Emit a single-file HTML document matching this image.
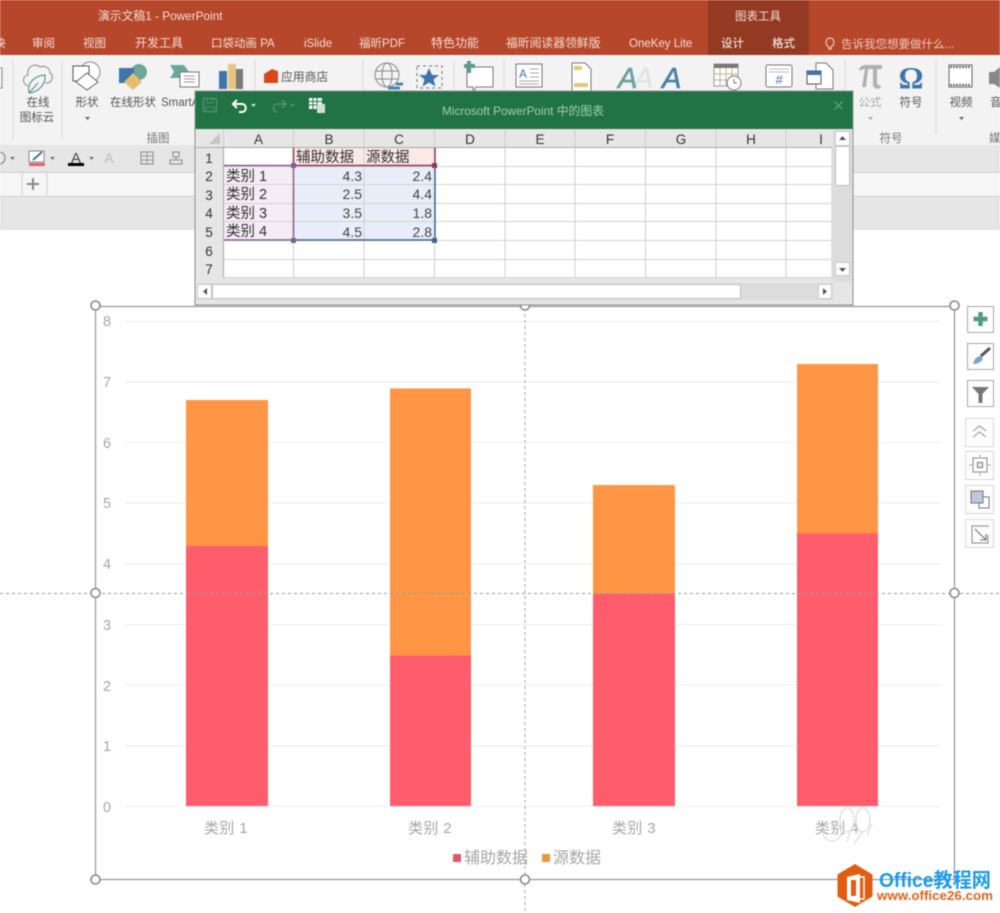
<!DOCTYPE html>
<html lang="zh"><head><meta charset="utf-8"><title>PowerPoint</title>
<style>
html,body{margin:0;padding:0;background:#fff;width:1000px;height:913px;overflow:hidden}
svg{display:block;filter:blur(.4px)}
text{font-family:"Liberation Sans","Noto Sans CJK SC",sans-serif}
.tab{fill:#f3ddd5;font-size:11.5px}
.rb{fill:#555;font-size:11.5px;text-anchor:middle}
.ch{fill:#333;font-size:13.5px;text-anchor:middle}
.c{fill:#333;font-size:14.5px}
.n{fill:#444;font-size:14px;text-anchor:end}
.ax{fill:#a6a6a6;font-size:14.5px}
.cat{fill:#a6a6a6;font-size:15px;text-anchor:middle;letter-spacing:.4px}
.h{fill:#fff;stroke:#8a8a8a;stroke-width:1.6}
.bt{fill:#fff;stroke:#a8a8a8;stroke-width:1}
.bl{fill:#fdfdfd;stroke:#d8d8d8;stroke-width:1}
</style></head><body>
<svg width="1000" height="913" viewBox="0 0 1000 913" xmlns="http://www.w3.org/2000/svg">
<!-- title / tabs -->
<rect width="1000" height="55" fill="#b7472a"/>
<rect x="708" width="101" height="55" fill="#943a22"/>
<text x="98" y="20" class="tab" style="font-size:11.800px">演示文稿1 - PowerPoint</text>
<text x="735" y="20" class="tab">图表工具</text>
<text x="-6" y="47" class="tab">映</text>
<text x="32" y="47" class="tab">审阅</text>
<text x="83" y="47" class="tab">视图</text>
<text x="135" y="47" class="tab" style="font-size:12px">开发工具</text>
<text x="211" y="47" class="tab">口袋动画 PA</text>
<text x="304" y="47" class="tab">iSlide</text>
<text x="359" y="47" class="tab">福昕PDF</text>
<text x="431" y="47" class="tab" style="font-size:12px">特色功能</text>
<text x="506" y="47" class="tab" style="font-size:11.800px">福昕阅读器领鲜版</text>
<text x="629" y="47" class="tab">OneKey Lite</text>
<text x="721" y="47" class="tab" style="fill:#fff">设计</text>
<text x="772" y="47" class="tab" style="fill:#fff">格式</text>
<path d="M829 49v-2c-5-3-3-9 1-9s6 6 1 9v2z" fill="none" stroke="#eec9bb" stroke-width="1.2"/>
<text x="841" y="48" class="tab" style="fill:#eec9bb">告诉我您想要做什么...</text>

<!-- ribbon -->
<rect y="55" width="1000" height="90" fill="#f3f3f3"/>
<rect y="145" width="1000" height="27" fill="#e6e6e6"/>
<rect y="172" width="1000" height="24" fill="#f6f6f6"/>
<rect y="196" width="1000" height="34" fill="#e6e6e6"/>
<rect y="172" width="1000" height="1" fill="#cfcfcf"/>
<rect y="196" width="1000" height="1" fill="#d0d0d0"/>
<path d="M22 173v23M47 173v23" stroke="#d4d4d4"/>
<path d="M33 178v12M27 184h12" stroke="#888" stroke-width="2"/>
<path d="M13 60v80M62 60v80M255 60v75M363 60v75M454 60v30M504 60v30M845 60v75M936 60v75" stroke="#dcdcdc" stroke-width="1"/>
<path d="M0 68h2v20H0" fill="none" stroke="#888"/>
<!-- cloud -->
<path d="M28 86c-6-2-6-10 0-11-2-7 6-13 12-8 5-2 10 1 10 6 4 2 3 8-2 10h-3" fill="none" stroke="#8a8a8a"/>
<path d="M29 93c-2-9 4-17 16-18 1 9-6 17-16 18zM29 93l9-10" fill="none" stroke="#4c8c80"/>
<text x="38" y="106" class="rb">在线</text><text x="37" y="121" class="rb">图标云</text>
<!-- shapes -->
<circle cx="90" cy="72" r="10" fill="#fff" stroke="#888"/>
<rect x="73" y="66" width="16" height="15" fill="#fff" stroke="#555"/>
<path d="M87 73l11 9-11 8-11-8z" fill="#fff" stroke="#666"/>
<text x="87" y="106" class="rb">形状</text>
<path d="M85 117h5l-2.500 3z" fill="#666"/>
<circle cx="139" cy="72" r="8" fill="#6aa99a"/>
<rect x="119" y="68" width="15" height="15" fill="#3f74ac"/>
<path d="M133 73l9 9-9 8-9-8z" fill="#e5bd6f"/>
<text x="133" y="106" class="rb">在线形状</text>
<path d="M170 65h14l5 7-5 6h-14l4-6z" fill="#6aa99a"/>
<rect x="180" y="72" width="19" height="15" fill="#fff" stroke="#777"/>
<path d="M184 76h11M184 79h11M184 82h11" stroke="#999"/>
<text x="161" y="106" class="rb" style="text-anchor:start">SmartA</text>
<rect x="219" y="71" width="8" height="18" fill="#3f74ac"/>
<rect x="228" y="64" width="8" height="25" fill="#e8c67f"/>
<rect x="236" y="69" width="7" height="20" fill="#7b7b7b"/>
<text x="158" y="142" class="rb" style="fill:#777">插图</text>
<path d="M264 74l8-5 5 2h1v12h-14z" fill="#d8471c"/>
<text x="281" y="81" class="rb" style="text-anchor:start;font-size:11.800px">应用商店</text>
<!-- globe -->
<circle cx="387" cy="75" r="12" fill="none" stroke="#888"/>
<ellipse cx="387" cy="75" rx="5" ry="12" fill="none" stroke="#888"/>
<path d="M375 71h24M375 79h24" stroke="#888"/>
<path d="M388 88h12M396 84h7" stroke="#4c86b5" stroke-width="3"/>
<rect x="417" y="66" width="25" height="22" fill="none" stroke="#777" stroke-dasharray="3 3"/>
<path d="M429 68l3 7h7l-5.500 4.500 2 7-6.500-4-6.500 4 2-7-5.500-4.500h7z" fill="#3f74ac"/>
<path d="M467 67h26v20h-17l-3 5v-5h-6z" fill="#fff" stroke="#777"/>
<path d="M469 61v12M464 66h11" stroke="#5c9b8b" stroke-width="4"/>
<rect x="516" y="64" width="26" height="23" fill="#fff" stroke="#777"/>
<text x="519" y="78" style="font-size:12px;fill:#3f74ac">A</text>
<path d="M530 69h9M530 73h9M530 77h9M519 81h20M519 84h20" stroke="#aaa"/>
<path d="M572 63h13l6 6v22h-19z" fill="#fff" stroke="#777"/>
<rect x="574" y="66" width="8" height="4" fill="#e5c678"/>
<rect x="574" y="83" width="14" height="4" fill="#e5c678"/>
<text x="634" y="88" style="font-size:29px;font-style:italic;fill:#dfe3e3">A</text>
<text x="618" y="88" style="font-size:29px;font-style:italic;fill:#6f9fa2;stroke:#6f9fa2;stroke-width:.6">A</text>
<text x="662" y="88" style="font-size:29px;font-style:italic;fill:#4d7ea8;stroke:#4d7ea8;stroke-width:.6">A</text>
<rect x="714" y="64" width="24" height="22" fill="#fff" stroke="#999"/>
<rect x="714" y="64" width="24" height="4" fill="#777"/>
<path d="M714 74h24M714 80h24M720 68v18M726 68v18M732 68v18" stroke="#c7b48a"/>
<circle cx="734" cy="83" r="7" fill="#fff" stroke="#777"/>
<path d="M734 79v4h3" fill="none" stroke="#777"/>
<rect x="766" y="65" width="26" height="22" rx="2" fill="#fff" stroke="#777"/>
<path d="M769 69h20M769 72h20" stroke="#bbb"/>
<text x="779" y="84" style="font-size:13px;font-style:italic;fill:#3f74ac;text-anchor:middle">#</text>
<path d="M816 63h10l7 7v19h-17z" fill="#fff" stroke="#777"/>
<rect x="807" y="71" width="14" height="13" fill="#fff" stroke="#555"/>
<rect x="807" y="71" width="14" height="4" fill="#3f74ac"/>
<path d="M859 69c2-3 4-4 7-4h16v4h-5v13c0 3 1 4 3 3l1 2c-3 3-8 2-8-3V69h-5l-2 18h-4l3-18c-3 0-4 1-5 2z" fill="#b0b0b0"/>
<text x="911" y="88" style="font-size:31px;font-family:'Liberation Serif',serif;font-weight:bold;fill:#3f74ac;text-anchor:middle">Ω</text>
<text x="870" y="106" class="rb" style="fill:#aaa">公式</text>
<path d="M868 117h5l-2.500 3z" fill="#aaa"/>
<text x="911" y="106" class="rb">符号</text>
<text x="891" y="142" class="rb" style="fill:#777">符号</text>
<rect x="949" y="65" width="23" height="22" fill="#fff" stroke="#666"/>
<path d="M950 67h21M950 85h21" stroke="#666" stroke-width="2" stroke-dasharray="2 1"/>
<text x="961" y="106" class="rb">视频</text>
<path d="M959 117h5l-2.500 3z" fill="#666"/>
<path d="M989 72h5l6-5v21l-6-4h-5z" fill="#888"/>
<text x="990" y="106" class="rb" style="text-anchor:start">音</text>
<text x="989" y="142" class="rb" style="fill:#777;text-anchor:start">媒</text>
<!-- second row -->
<circle cx="-1" cy="158" r="6" fill="none" stroke="#777"/>
<path d="M10 157h5l-2.500 3z" fill="#777"/>
<rect x="29" y="151" width="15" height="11" fill="#fff" stroke="#888"/>
<path d="M33 160l9-8" stroke="#3f74ac" stroke-width="2"/>
<rect x="29" y="163" width="16" height="3" fill="#e0606c"/>
<path d="M50 157h5l-2.500 3z" fill="#777"/>
<text x="76" y="163" style="font-size:15px;fill:#444;text-anchor:middle">A</text>
<rect x="68" y="163" width="16" height="3" fill="#000"/>
<path d="M89 157h5l-2.500 3z" fill="#777"/>
<text x="109" y="163" style="font-size:14px;fill:#bbb;text-anchor:middle">A</text>
<rect x="141" y="152" width="12" height="12" fill="none" stroke="#888"/>
<path d="M141 156h12M141 160h12M147 152v12" stroke="#999"/>
<rect x="173" y="152" width="6" height="5" fill="none" stroke="#888"/>
<path d="M170 160h12v4h-12zM176 157v3" fill="none" stroke="#888"/>

<!-- chart -->
<path d="M125 321.500h815M125 382h815M125 442.500h815M125 503h815M125 564h815M125 624.500h815M125 685h815M125 746h815M125 806.500h815" stroke="#ececec" fill="none"/>
<g fill="#ff5c6c">
<rect x="186" y="546" width="82" height="260"/>
<rect x="390" y="655.500" width="81" height="150.500"/>
<rect x="593" y="594" width="82" height="212"/>
<rect x="797" y="533.500" width="81" height="272.500"/>
</g>
<g fill="#ff9645">
<rect x="186" y="400" width="82" height="146"/>
<rect x="390" y="388.500" width="81" height="267"/>
<rect x="593" y="485" width="82" height="109"/>
<rect x="797" y="364" width="81" height="169.500"/>
</g>
<g class="ax">
<text x="103" y="326">8</text><text x="103" y="387">7</text><text x="103" y="448">6</text><text x="103" y="508">5</text><text x="103" y="569">4</text><text x="103" y="630">3</text><text x="103" y="691">2</text><text x="103" y="751">1</text><text x="103" y="812">0</text>
</g>
<text x="226" y="833" class="cat">类别 1</text>
<text x="430" y="833" class="cat">类别 2</text>
<text x="634" y="833" class="cat">类别 3</text>
<text x="837" y="833" class="cat">类别 4</text>
<rect x="453" y="854" width="8" height="8" fill="#e25467"/>
<text x="464" y="863" class="ax" style="font-size:16px">辅助数据</text>
<rect x="542" y="854" width="8" height="8" fill="#e8963f"/>
<text x="553" y="863" class="ax" style="font-size:16px">源数据</text>
<!-- watermark flower -->
<g fill="none" stroke="#dcdcdc" stroke-width="1.2">
<ellipse cx="847" cy="820" rx="7" ry="12"/><ellipse cx="863" cy="820" rx="7" ry="12"/>
<circle cx="832" cy="832" r="9"/><path d="M850 832l-3 10M862 832l-8 12M872 824l-5 12"/>
</g>
<!-- guides / frame -->
<path d="M0 593.500h1000" stroke="#9a9a9a" stroke-dasharray="3 3"/>
<path d="M525 230v683" stroke="#a5a5a5" stroke-dasharray="3 3"/>
<rect x="95.500" y="306.500" width="859" height="573" fill="none" stroke="#9a9a9a" stroke-width="1.300"/>
<circle class="h" cx="95.500" cy="305.500" r="4.500"/><circle class="h" cx="525" cy="305.500" r="4.500"/><circle class="h" cx="954.500" cy="305.500" r="4.500"/>
<circle class="h" cx="95.500" cy="593" r="4.500"/><circle class="h" cx="954.500" cy="593" r="4.500"/>
<circle class="h" cx="95.500" cy="879.500" r="4.500"/><circle class="h" cx="525" cy="879.500" r="4.500"/>
<!-- side buttons -->
<rect class="bt" x="967.500" y="306.500" width="26" height="26"/>
<path d="M980.500 312v14M973.500 319h14" stroke="#4f9c80" stroke-width="4.500"/>
<rect class="bt" x="967.500" y="343.500" width="26" height="26"/>
<path d="M990 348l-9 8" stroke="#555" stroke-width="3"/>
<path d="M973 364c1-4 3-8 8-8l2 2c-1 4-5 6-10 6z" fill="#7ba7c6"/>
<rect class="bt" x="967.500" y="380.500" width="26" height="26"/>
<path d="M972 387h17l-6.500 7v9h-4v-9z" fill="#777"/>
<rect class="bl" x="965.500" y="418.500" width="28" height="28"/>
<path d="M973 431l6.500-5 6.500 5M973 437l6.500-5 6.500 5" fill="none" stroke="#aaa" stroke-width="1.300"/>
<rect class="bl" x="965.500" y="451.500" width="28" height="28"/>
<rect x="973" y="458" width="14" height="14" fill="none" stroke="#888"/>
<rect x="977.500" y="462.500" width="5" height="5" fill="#eee" stroke="#777"/>
<path d="M980 454v3M980 473v3M969 465h3M988 465h3" stroke="#aaa"/>
<rect class="bl" x="965.500" y="485.500" width="28" height="28"/>
<rect x="979" y="497" width="10" height="11" fill="none" stroke="#777"/>
<rect x="971" y="491" width="12" height="12" fill="#bcc8dc" stroke="#777"/>
<rect class="bl" x="965.500" y="519.500" width="28" height="28"/>
<path d="M988 527v-1h-16v17h16v-8" fill="none" stroke="#888"/>
<path d="M975 529l11 11M986 534v6h-6" fill="none" stroke="#888" stroke-width="1.300"/>

<!-- excel window -->
<rect x="195" y="91" width="658" height="214" fill="#e6e6e6" stroke="#8f8f8f"/>
<rect x="195" y="91" width="658" height="38" fill="#217346"/>
<rect x="203.500" y="98.500" width="13" height="13" fill="none" stroke="#4f8f6c" stroke-width="1.500"/>
<path d="M207 99v4h6v-4M206 111v-4h8v4" fill="none" stroke="#4f8f6c"/>
<path d="M234 104h8c5 0 5 8 0 8h-3M237 100l-4 4 4 4" fill="none" stroke="#fff" stroke-width="2"/>
<path d="M251 104h5l-2.500 3z" fill="#cfe3d8"/>
<path d="M285 104h-8c-5 0-5 8 0 8M282 100l4 4-4 4" fill="none" stroke="#4f8f6c" stroke-width="1.600"/>
<path d="M290 104h5l-2.500 3z" fill="#4f8f6c"/>
<rect x="309" y="98" width="13" height="11" fill="#fff"/>
<path d="M309 101.500h13M309 105h13M313 98v11M317 98v11" stroke="#217346"/>
<rect x="317" y="104" width="8" height="9" fill="#cfe3d8"/>
<text x="442" y="115" style="font-size:11.800px;fill:#9fcdb3">Microsoft PowerPoint 中的图表</text>
<path d="M834.500 101.500l8 8M842.500 101.500l-8 8" stroke="#5f9c7f" stroke-width="1.300"/>

<!-- grid -->
<rect x="195.500" y="129" width="657" height="19" fill="#e6e6e6"/>
<rect x="196" y="148" width="28" height="130" fill="#e6e6e6"/>
<rect x="224" y="148" width="608" height="130" fill="#fff"/>
<path d="M220 133v11h-11z" fill="#c5c5c5"/>
<rect x="224" y="166" width="70" height="74" fill="#f5edf5"/>
<rect x="294" y="148" width="141" height="18" fill="#fbe9e9"/>
<rect x="294" y="166" width="141" height="74" fill="#e9edf9"/>
<path d="M224 166.500h608M224 184.500h608M224 203.500h608M224 221.500h608M224 240.500h608M224 259.500h608M224 277.500h608" stroke="#d2d2d2" fill="none"/>
<path d="M223.500 129v149M293.500 129v149M364 129v149M434.500 129v149M505 129v149M575 129v149M645.500 129v149M716 129v149M786 129v149M832 148v130" stroke="#cfcfcf" fill="none"/>
<path d="M196 147.500h636" stroke="#a8a8a8"/>
<path d="M223.500 148v130" stroke="#a8a8a8"/>
<text x="258.500" y="144" class="ch">A</text><text x="329" y="144" class="ch">B</text><text x="399" y="144" class="ch">C</text><text x="470" y="144" class="ch">D</text><text x="540" y="144" class="ch">E</text><text x="610" y="144" class="ch">F</text><text x="681" y="144" class="ch">G</text><text x="751" y="144" class="ch">H</text><text x="821" y="144" class="ch">I</text>
<text x="209" y="163" class="ch">1</text><text x="209" y="181" class="ch">2</text><text x="209" y="200" class="ch">3</text><text x="209" y="218" class="ch">4</text><text x="209" y="237" class="ch">5</text><text x="209" y="256" class="ch">6</text><text x="209" y="274" class="ch">7</text>
<text x="296" y="162" class="c">辅助数据</text><text x="366" y="162" class="c">源数据</text>
<text x="226" y="181" class="c">类别 1</text><text x="226" y="199" class="c">类别 2</text><text x="226" y="218" class="c">类别 3</text><text x="226" y="236" class="c">类别 4</text>
<text x="362" y="181" class="n">4.3</text><text x="362" y="199" class="n">2.5</text><text x="362" y="218" class="n">3.5</text><text x="362" y="237" class="n">4.5</text>
<text x="432" y="181" class="n">2.4</text><text x="432" y="199" class="n">4.4</text><text x="432" y="218" class="n">1.8</text><text x="432" y="237" class="n">2.8</text>
<!-- range highlights -->
<path d="M224 165.500h69M224 240h69M293.500 166v74" fill="none" stroke="#85608f" stroke-width="1.500"/>
<path d="M294 165.500h141M293.500 148v17M435 148v17" fill="none" stroke="#93384f" stroke-width="1.500"/>
<path d="M295 240h139M435 166v74" fill="none" stroke="#3f6394" stroke-width="1.500"/>
<rect x="291" y="163" width="5" height="5" fill="#85608f"/><rect x="432" y="163" width="5" height="5" fill="#93384f"/><rect x="291" y="238" width="5" height="5" fill="#85608f"/><rect x="432" y="238" width="5" height="5" fill="#3f6394"/>
<!-- scrollbars -->
<rect x="833" y="130" width="19" height="152" fill="#dcdcdc"/>
<rect x="835.500" y="131.500" width="14" height="14" fill="#fff" stroke="#c8c8c8"/>
<path d="M839 140h7l-3.500-4z" fill="#555"/>
<rect x="835.500" y="146.500" width="14" height="39" rx="1" fill="#fff" stroke="#c0c0c0"/>
<rect x="835.500" y="262.500" width="14" height="13" fill="#fff" stroke="#c8c8c8"/>
<path d="M839 268h7l-3.500 4z" fill="#555"/>
<rect x="197" y="283" width="636" height="17" fill="#dcdcdc"/>
<rect x="197.500" y="284.500" width="14" height="14" fill="#fff" stroke="#c8c8c8"/>
<path d="M207 288v7l-4-3.500z" fill="#555"/>
<rect x="212.500" y="284.500" width="528" height="14" fill="#fff" stroke="#c0c0c0"/>
<rect x="818.500" y="284.500" width="13" height="14" fill="#fff" stroke="#c8c8c8"/>
<path d="M823 288v7l4-3.500z" fill="#555"/>
<rect x="195" y="91" width="658" height="214" fill="none" stroke="#8f8f8f"/>

<!-- logo -->
<path d="M855 864l17.500 10.500v22L855 907l-17.500-10.500v-22z" fill="#e25c12"/>
<path d="M847 877l13-3v29l-13-3z" fill="#fff"/>
<path d="M860 877h4v22h-4" fill="none" stroke="#fff" stroke-width="1.500"/>
<rect x="851" y="880" width="5" height="16" fill="#e25c12"/>
<text x="879" y="887" style="font-size:20px;font-weight:bold;fill:#1c9be6" textLength="112" lengthAdjust="spacingAndGlyphs">Office教程网</text>
<text x="877" y="900" style="font-size:12.500px;font-weight:bold;fill:#e0631b" textLength="116" lengthAdjust="spacingAndGlyphs">www.office26.com</text>
</svg>
</body></html>
